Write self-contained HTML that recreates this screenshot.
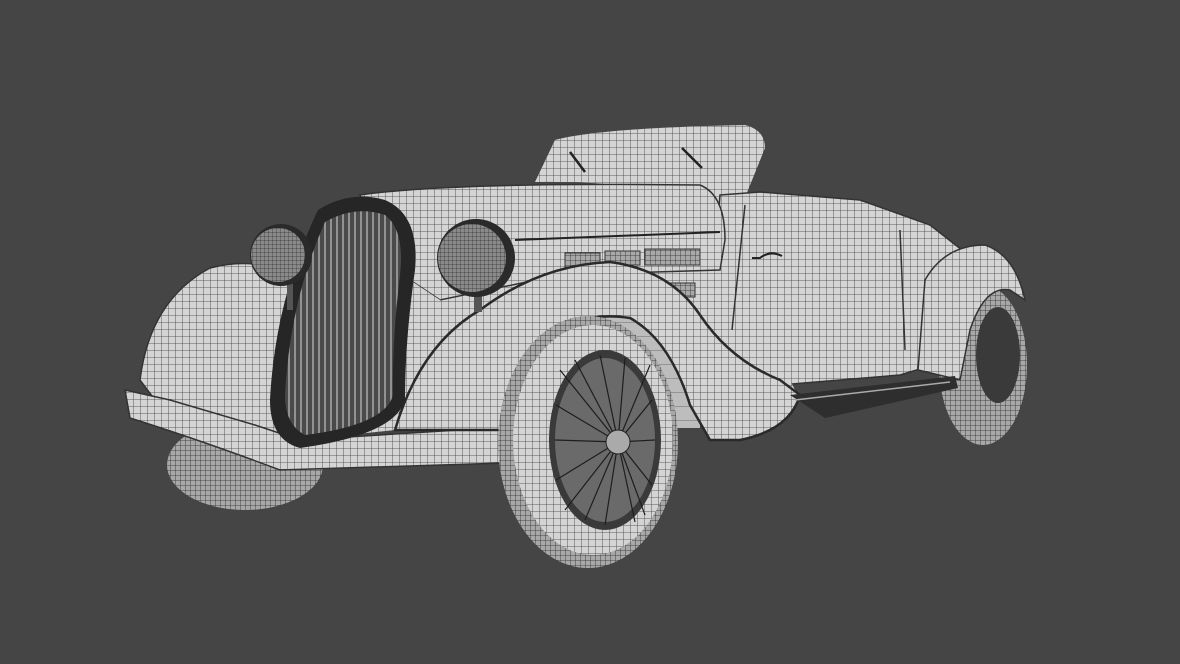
<!DOCTYPE html>
<html><head><meta charset="utf-8"><style>html,body{margin:0;padding:0;background:#454545;width:1180px;height:664px;overflow:hidden}</style></head>
<body>
<svg width="1180" height="664" viewBox="0 0 1180 664" xmlns="http://www.w3.org/2000/svg">
<defs>
<pattern id="g" width="7" height="7" patternUnits="userSpaceOnUse">
<rect width="7" height="7" fill="#d4d4d4"/>
<path d="M0 0H7M0 0V7" stroke="#3a3a3a" stroke-width="0.8" fill="none"/>
</pattern>
<pattern id="gd" width="5" height="5" patternUnits="userSpaceOnUse">
<rect width="5" height="5" fill="#a8a8a8"/>
<path d="M0 0H5M0 0V5" stroke="#2a2a2a" stroke-width="0.8" fill="none"/>
</pattern>
<pattern id="gl" width="4" height="4" patternUnits="userSpaceOnUse">
<rect width="4" height="4" fill="#8a8a8a"/>
<path d="M0 0H4M0 0V4" stroke="#333" stroke-width="0.7" fill="none"/>
</pattern>
<pattern id="gr" width="6" height="6" patternUnits="userSpaceOnUse">
<rect width="6" height="6" fill="#4a4a4a"/>
<path d="M1 0V6" stroke="#b0b0b0" stroke-width="1.4" fill="none"/>
</pattern>
<pattern id="gi" width="14" height="14" patternUnits="userSpaceOnUse">
<rect width="14" height="14" fill="#bdbdbd"/>
<path d="M0 0H14" stroke="#555" stroke-width="0.8" fill="none"/>
</pattern>
</defs>
<rect width="1180" height="664" fill="#454545"/>
<ellipse cx="983" cy="365" rx="44" ry="80" fill="url(#gd)"/>
<ellipse cx="998" cy="355" rx="22" ry="48" fill="#3a3a3a"/>
<ellipse cx="245" cy="465" rx="78" ry="45" fill="url(#gd)"/>
<path d="M535 182 L555 140 Q600 128 745 125 Q765 130 765 148 L740 210 Q650 180 535 182Z" fill="url(#g)"/>
<path d="M720 195 L760 192 L860 200 L930 225 L962 250 L965 290 L950 360 L900 375 L780 385 L740 340 L715 260Z" fill="url(#g)" stroke="#333" stroke-width="1.5"/>
<path d="M918 370 L925 280 Q945 245 985 245 Q1015 255 1025 300 L1010 290 Q985 285 970 330 L960 380Z" fill="url(#g)" stroke="#333" stroke-width="1.5"/>
<path d="M430 280 L730 250 L790 380 L800 400 L760 425 L540 428 L440 420Z" fill="url(#g)"/>
<path d="M600 305 Q650 300 680 340 Q700 380 700 428 L560 428 Z" fill="url(#gi)"/>
<path d="M360 195 Q450 182 700 185 Q725 195 725 240 L720 270 L560 275 L440 300 L380 260Z" fill="url(#g)" stroke="#333" stroke-width="1.5"/>
<g fill="url(#gd)" stroke="#333" stroke-width="1">
<rect x="565" y="253" width="35" height="14"/><rect x="605" y="251" width="35" height="14"/><rect x="645" y="249" width="55" height="16"/>
<rect x="645" y="283" width="50" height="14"/>
</g>
<path d="M140 380 Q150 300 210 268 Q260 255 300 280 L300 450 L170 420Z" fill="url(#g)" stroke="#333" stroke-width="1.5"/>
<path d="M125 390 L130 418 Q200 440 280 470 L535 462 L538 425 L300 440 L255 425 L170 400Z" fill="url(#g)" stroke="#333" stroke-width="1.5"/>
<path d="M380 260 L440 300 L480 330 L440 360 L395 430 L300 440 L330 330Z" fill="url(#g)"/>
<path d="M395 430 Q420 345 480 310 Q540 265 610 262 Q670 270 700 315 Q730 360 780 380 L800 395 Q790 430 740 440 L710 440 L690 405 Q670 340 630 318 Q580 310 540 340 L535 430Z" fill="url(#g)" stroke="#2a2a2a" stroke-width="2.5"/>
<ellipse cx="588" cy="442" rx="90" ry="126" fill="url(#gd)"/>
<ellipse cx="593" cy="440" rx="80" ry="115" fill="url(#g)"/>
<ellipse cx="605" cy="440" rx="56" ry="90" fill="#3a3a3a"/>
<ellipse cx="605" cy="440" rx="50" ry="82" fill="#6a6a6a"/>
<g stroke="#1e1e1e" stroke-width="1.2">
<path d="M618 442L560 370M618 442L650 365M618 442L555 440M618 442L655 440M618 442L565 510M618 442L645 515M618 442L600 355M618 442L605 525M618 442L575 360M618 442L635 522M618 442L556 405M618 442L556 480M618 442L652 400M618 442L652 485M618 442L585 520M618 442L625 358"/>
</g>
<circle cx="618" cy="442" r="12" fill="#aaa" stroke="#222"/>
<path d="M318 210 Q350 190 385 200 Q420 215 415 270 Q405 340 405 400 Q395 435 300 448 Q270 440 270 400 Q275 300 318 210Z" fill="#262626"/>
<path d="M325 222 Q355 205 385 215 Q405 230 400 275 Q392 340 393 395 Q385 425 305 435 Q285 425 285 395 Q290 300 325 222Z" fill="url(#gr)"/>
<rect x="287" y="280" width="6" height="30" fill="#555"/>
<rect x="474" y="290" width="8" height="22" fill="#555"/>
<circle cx="281" cy="255" r="31" fill="#2a2a2a"/>
<circle cx="278" cy="255" r="27" fill="url(#gl)"/>
<circle cx="476" cy="258" r="39" fill="#2a2a2a"/>
<circle cx="472" cy="258" r="34" fill="url(#gl)"/>
<path d="M790 395 L955 376 L958 388 L825 418 Z" fill="#2e2e2e"/>
<path d="M795 400 L950 382" stroke="#aaa" stroke-width="1.5"/>
<path d="M515 240 L720 232" stroke="#222" stroke-width="2"/>
<path d="M745 205 L732 330 M900 230 L905 350" stroke="#333" stroke-width="1.5"/>
<path d="M752 258 L760 258 Q770 250 782 256" stroke="#222" stroke-width="2" fill="none"/>
<path d="M570 152 L585 172 M682 148 L702 168" stroke="#222" stroke-width="2.5"/>
</svg>
</body></html>
